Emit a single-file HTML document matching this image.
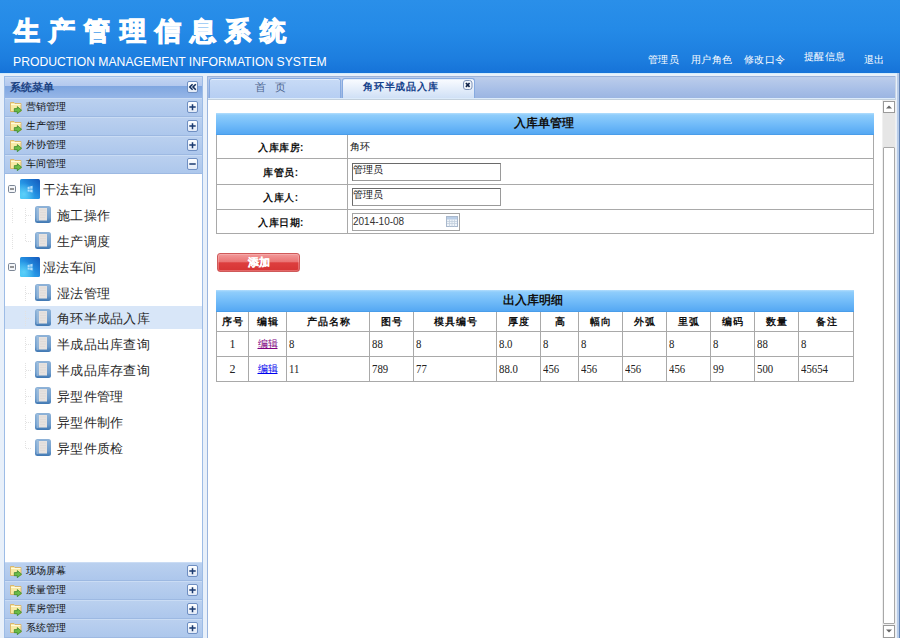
<!DOCTYPE html>
<html><head><meta charset="utf-8"><style>
*{box-sizing:border-box}
html,body{margin:0;padding:0;width:900px;height:638px;overflow:hidden}
body{font-family:"Liberation Sans",sans-serif;background:#e8f0fa;position:relative}
.abs{position:absolute}
#hdr{left:0;top:0;width:900px;height:73px;background:linear-gradient(#2a8fe9 0,#248ae7 40%,#1d7edf 80%,#1673d8 100%)}
#title{left:14px;top:14px;color:#fff;font-size:26px;font-weight:bold;-webkit-text-stroke:1.2px #fff;letter-spacing:9.2px;white-space:nowrap;line-height:34px}
#eng{left:13px;top:55px;color:#fff;font-size:12.2px;white-space:nowrap;line-height:14px}
.nav{top:53px;color:#fff;font-size:10px;letter-spacing:0.3px;white-space:nowrap;line-height:14px}
#side{left:4px;top:76px;width:199px;height:562px;background:#fff;border:1px solid #9dbce6;border-bottom:0}
#stitle{left:0;top:0;width:197px;height:21px;background:linear-gradient(#dae7f8 0,#c2d4f1 1px,#b3c8ee 9px,#7fa6e0 9px,#96b6e7 21px)}
#stitle span{position:absolute;left:5px;top:4px;font-size:10.5px;font-weight:bold;color:#1d4383;line-height:12px}
.btn{position:absolute;width:11px;height:12px;border:1px solid #6f8fc2;border-radius:2px;background:linear-gradient(#fdfeff,#e2eaf7);}
.btn svg{position:absolute;left:0;top:0}
.item{position:absolute;left:0;width:197px;height:19px;background:linear-gradient(#bad0ef,#adc7ec);border-top:1px solid #cadcf4;border-bottom:1px solid #9db9e2}
.item span{position:absolute;left:21px;top:2px;font-size:10px;color:#111;line-height:11px}
.fold{position:absolute;left:5px;top:3px;width:12px;height:12px}
.tree{position:absolute;left:0;top:97px;width:197px;height:388px;background:#fff}
.tn{position:absolute;font-size:13px;letter-spacing:0.3px;color:#2a2a2a;line-height:16px;white-space:nowrap}
.dv{position:absolute;width:1px;border-left:1px dotted #e2e2e2}
.dh{position:absolute;height:1px;border-top:1px dotted #e2e2e2}
#main{left:207px;top:76px;width:689px;height:562px;background:#fff;border-left:1px solid #9ab5de;border-right:1px solid #c9d5e5}
#tabs{left:0;top:0;width:687px;height:24px;background:linear-gradient(#bccdeb 0,#a8bfe7 12px,#9bb5e2 21px,#dcebfa 21px,#dcebfa 22px);border-top:1px solid #9cb2d9;border-bottom:1px solid #c3d0dc}
.tab{position:absolute;top:1px;height:20px;border:1px solid #86aae0;border-bottom:0;border-radius:3px 3px 0 0;background:linear-gradient(#c8dbf6,#b6cef2);box-shadow:inset 0 1px 0 #e3edfb}
table{border-collapse:collapse;table-layout:fixed}
.hd{background:linear-gradient(#9fd0f9 0,#7bbdf6 40%,#52a6f1 100%)}
#form td{border:1px solid #a9a9a9;font-size:11px;padding:0}
#det td{border:1px solid #a9a9a9;font-size:11px;padding:0 0 0 2px;font-family:"Liberation Serif",serif}
#det tr.h td{font-family:"Liberation Sans",sans-serif;font-weight:bold;text-align:center;padding:0}
</style></head><body>
<svg width="0" height="0" style="position:absolute">
<defs>
<linearGradient id="gw" x1="1" y1="0" x2="0" y2="1"><stop offset="0" stop-color="#1458bb"/><stop offset="0.5" stop-color="#2490e2"/><stop offset="1" stop-color="#38c0f4"/></linearGradient>
<radialGradient id="gw2" cx="0.2" cy="0.75" r="0.55"><stop offset="0" stop-color="#70e0ff" stop-opacity="0.7"/><stop offset="1" stop-color="#70e0ff" stop-opacity="0"/></radialGradient>
<linearGradient id="gp" x1="0" y1="0" x2="0" y2="1"><stop offset="0" stop-color="#8fb3d8"/><stop offset="0.7" stop-color="#6d9bcb"/><stop offset="1" stop-color="#3f77b2"/></linearGradient>




</defs></svg>
<div id="hdr" class="abs"></div><div class="abs" style="left:0;top:73px;width:900px;height:1px;background:#d2ebfc"></div>
<div id="title" class="abs">生产管理信息系统</div>
<div id="eng" class="abs">PRODUCTION MANAGEMENT INFORMATION SYSTEM</div>
<div class="abs nav" style="left:648px">管理员</div>
<div class="abs nav" style="left:691px">用户角色</div>
<div class="abs nav" style="left:744px">修改口令</div>
<div class="abs nav" style="left:804px;top:50px">提醒信息</div>
<div class="abs nav" style="left:864px">退出</div>
<div id="side" class="abs">
<div id="stitle" class="abs"><span>系统菜单</span><div class="btn" style="left:182px;top:4px"><svg width="9" height="10"><path d="M4.6 2.2L1.8 5L4.6 7.8M7.8 2.2L5 5L7.8 7.8" stroke="#14305e" stroke-width="1.6" fill="none"/></svg></div></div>
<div class="item" style="top:21px"><svg class="fold" viewBox="0 0 12 12"><path d="M0.5 0.5H4L5 1.5H11V9.5H0.5Z" fill="#f8eaa6" stroke="#dcae58" stroke-width="0.8"/><path d="M1 2.5H10.5" stroke="#fffadc" stroke-width="1"/><path d="M4.3 6.6H7.3V4.6L11.6 8.2L7.3 11.7V9.7H4.3Z" fill="#6cbc48" stroke="#2f7f24" stroke-width="0.7"/></svg><span>营销管理</span><div class="btn" style="left:182px;top:2px"><svg width="9" height="10"><path d="M1.3 5H7.7M4.5 2.3V8.3" stroke="#1a3a70" stroke-width="1.5"/></svg></div></div>
<div class="item" style="top:40px"><svg class="fold" viewBox="0 0 12 12"><path d="M0.5 0.5H4L5 1.5H11V9.5H0.5Z" fill="#f8eaa6" stroke="#dcae58" stroke-width="0.8"/><path d="M1 2.5H10.5" stroke="#fffadc" stroke-width="1"/><path d="M4.3 6.6H7.3V4.6L11.6 8.2L7.3 11.7V9.7H4.3Z" fill="#6cbc48" stroke="#2f7f24" stroke-width="0.7"/></svg><span>生产管理</span><div class="btn" style="left:182px;top:2px"><svg width="9" height="10"><path d="M1.3 5H7.7M4.5 2.3V8.3" stroke="#1a3a70" stroke-width="1.5"/></svg></div></div>
<div class="item" style="top:59px"><svg class="fold" viewBox="0 0 12 12"><path d="M0.5 0.5H4L5 1.5H11V9.5H0.5Z" fill="#f8eaa6" stroke="#dcae58" stroke-width="0.8"/><path d="M1 2.5H10.5" stroke="#fffadc" stroke-width="1"/><path d="M4.3 6.6H7.3V4.6L11.6 8.2L7.3 11.7V9.7H4.3Z" fill="#6cbc48" stroke="#2f7f24" stroke-width="0.7"/></svg><span>外协管理</span><div class="btn" style="left:182px;top:2px"><svg width="9" height="10"><path d="M1.3 5H7.7M4.5 2.3V8.3" stroke="#1a3a70" stroke-width="1.5"/></svg></div></div>
<div class="item" style="top:78px"><svg class="fold" viewBox="0 0 12 12"><path d="M0.5 0.5H4L5 1.5H11V9.5H0.5Z" fill="#f8eaa6" stroke="#dcae58" stroke-width="0.8"/><path d="M1 2.5H10.5" stroke="#fffadc" stroke-width="1"/><path d="M4.3 6.6H7.3V4.6L11.6 8.2L7.3 11.7V9.7H4.3Z" fill="#6cbc48" stroke="#2f7f24" stroke-width="0.7"/></svg><span>车间管理</span><div class="btn" style="left:182px;top:2px"><svg width="9" height="10"><path d="M1.3 5H7.7" stroke="#1a3a70" stroke-width="1.5"/></svg></div></div>
<div class="tree">
<div style="position:absolute;left:0;top:132px;width:197px;height:23px;background:#d8e6f8"></div>
<svg style="position:absolute;left:3px;top:11px" width="8" height="8" viewBox="0 0 8 8"><rect x="0.5" y="0.5" width="7" height="7" rx="1.2" fill="#f4f6f9" stroke="#7d8796"/><path d="M2 4H6" stroke="#333" stroke-width="1"/></svg>
<svg style="position:absolute;left:15px;top:5px" width="20" height="20" viewBox="0 0 20 20"><rect x="0" y="0" width="20" height="20" rx="1.5" fill="url(#gw)"/><rect x="0" y="0" width="20" height="20" rx="1.5" fill="url(#gw2)"/><path d="M7.6 7.9l2.1-.5v2.5H7.6zM10.2 7.3l2.4-.6v3.1h-2.4zM7.6 10.4h2.1v2.4l-2.1-.4zM10.2 10.4h2.4v3l-2.4-.5z" fill="#bfe6ff" opacity="0.9"/></svg>
<div class="tn" style="left:38px;top:8px">干法车间</div>
<div class="dv" style="left:7px;top:34px;height:15px"></div>
<div class="dv" style="left:20px;top:34px;height:15px"></div>
<div class="dh" style="left:21px;top:41px;width:5px"></div>
<svg style="position:absolute;left:30px;top:32px" width="16" height="17" viewBox="0 0 16 17"><rect x="0" y="0" width="16" height="17" rx="2.5" fill="url(#gp)"/><rect x="1.5" y="1" width="2" height="14" fill="#a9c8e6" opacity="0.6"/><path d="M3.8 2H12V14.5H3.8Z" fill="#e6e2e0"/><path d="M5 4H11M5 6.5H11M5 9H11M5 11.5H10" stroke="#dcd6d2" stroke-width="0.6"/></svg>
<div class="tn" style="left:52px;top:34px">施工操作</div>
<div class="dv" style="left:7px;top:60px;height:15px"></div>
<div class="dv" style="left:20px;top:60px;height:7px"></div>
<div class="dh" style="left:21px;top:67px;width:5px"></div>
<svg style="position:absolute;left:30px;top:58px" width="16" height="17" viewBox="0 0 16 17"><rect x="0" y="0" width="16" height="17" rx="2.5" fill="url(#gp)"/><rect x="1.5" y="1" width="2" height="14" fill="#a9c8e6" opacity="0.6"/><path d="M3.8 2H12V14.5H3.8Z" fill="#e6e2e0"/><path d="M5 4H11M5 6.5H11M5 9H11M5 11.5H10" stroke="#dcd6d2" stroke-width="0.6"/></svg>
<div class="tn" style="left:52px;top:60px">生产调度</div>
<svg style="position:absolute;left:3px;top:89px" width="8" height="8" viewBox="0 0 8 8"><rect x="0.5" y="0.5" width="7" height="7" rx="1.2" fill="#f4f6f9" stroke="#7d8796"/><path d="M2 4H6" stroke="#333" stroke-width="1"/></svg>
<svg style="position:absolute;left:15px;top:83px" width="20" height="20" viewBox="0 0 20 20"><rect x="0" y="0" width="20" height="20" rx="1.5" fill="url(#gw)"/><rect x="0" y="0" width="20" height="20" rx="1.5" fill="url(#gw2)"/><path d="M7.6 7.9l2.1-.5v2.5H7.6zM10.2 7.3l2.4-.6v3.1h-2.4zM7.6 10.4h2.1v2.4l-2.1-.4zM10.2 10.4h2.4v3l-2.4-.5z" fill="#bfe6ff" opacity="0.9"/></svg>
<div class="tn" style="left:38px;top:86px">湿法车间</div>
<div class="dv" style="left:20px;top:112px;height:15px"></div>
<div class="dh" style="left:21px;top:119px;width:5px"></div>
<svg style="position:absolute;left:30px;top:110px" width="16" height="17" viewBox="0 0 16 17"><rect x="0" y="0" width="16" height="17" rx="2.5" fill="url(#gp)"/><rect x="1.5" y="1" width="2" height="14" fill="#a9c8e6" opacity="0.6"/><path d="M3.8 2H12V14.5H3.8Z" fill="#e6e2e0"/><path d="M5 4H11M5 6.5H11M5 9H11M5 11.5H10" stroke="#dcd6d2" stroke-width="0.6"/></svg>
<div class="tn" style="left:52px;top:112px">湿法管理</div>
<div class="dv" style="left:20px;top:137px;height:15px"></div>
<div class="dh" style="left:21px;top:144px;width:5px"></div>
<svg style="position:absolute;left:30px;top:135px" width="16" height="17" viewBox="0 0 16 17"><rect x="0" y="0" width="16" height="17" rx="2.5" fill="url(#gp)"/><rect x="1.5" y="1" width="2" height="14" fill="#a9c8e6" opacity="0.6"/><path d="M3.8 2H12V14.5H3.8Z" fill="#e6e2e0"/><path d="M5 4H11M5 6.5H11M5 9H11M5 11.5H10" stroke="#dcd6d2" stroke-width="0.6"/></svg>
<div class="tn" style="left:52px;top:137px">角环半成品入库</div>
<div class="dv" style="left:20px;top:163px;height:15px"></div>
<div class="dh" style="left:21px;top:170px;width:5px"></div>
<svg style="position:absolute;left:30px;top:161px" width="16" height="17" viewBox="0 0 16 17"><rect x="0" y="0" width="16" height="17" rx="2.5" fill="url(#gp)"/><rect x="1.5" y="1" width="2" height="14" fill="#a9c8e6" opacity="0.6"/><path d="M3.8 2H12V14.5H3.8Z" fill="#e6e2e0"/><path d="M5 4H11M5 6.5H11M5 9H11M5 11.5H10" stroke="#dcd6d2" stroke-width="0.6"/></svg>
<div class="tn" style="left:52px;top:163px">半成品出库查询</div>
<div class="dv" style="left:20px;top:189px;height:15px"></div>
<div class="dh" style="left:21px;top:196px;width:5px"></div>
<svg style="position:absolute;left:30px;top:187px" width="16" height="17" viewBox="0 0 16 17"><rect x="0" y="0" width="16" height="17" rx="2.5" fill="url(#gp)"/><rect x="1.5" y="1" width="2" height="14" fill="#a9c8e6" opacity="0.6"/><path d="M3.8 2H12V14.5H3.8Z" fill="#e6e2e0"/><path d="M5 4H11M5 6.5H11M5 9H11M5 11.5H10" stroke="#dcd6d2" stroke-width="0.6"/></svg>
<div class="tn" style="left:52px;top:189px">半成品库存查询</div>
<div class="dv" style="left:20px;top:215px;height:15px"></div>
<div class="dh" style="left:21px;top:222px;width:5px"></div>
<svg style="position:absolute;left:30px;top:213px" width="16" height="17" viewBox="0 0 16 17"><rect x="0" y="0" width="16" height="17" rx="2.5" fill="url(#gp)"/><rect x="1.5" y="1" width="2" height="14" fill="#a9c8e6" opacity="0.6"/><path d="M3.8 2H12V14.5H3.8Z" fill="#e6e2e0"/><path d="M5 4H11M5 6.5H11M5 9H11M5 11.5H10" stroke="#dcd6d2" stroke-width="0.6"/></svg>
<div class="tn" style="left:52px;top:215px">异型件管理</div>
<div class="dv" style="left:20px;top:241px;height:15px"></div>
<div class="dh" style="left:21px;top:248px;width:5px"></div>
<svg style="position:absolute;left:30px;top:239px" width="16" height="17" viewBox="0 0 16 17"><rect x="0" y="0" width="16" height="17" rx="2.5" fill="url(#gp)"/><rect x="1.5" y="1" width="2" height="14" fill="#a9c8e6" opacity="0.6"/><path d="M3.8 2H12V14.5H3.8Z" fill="#e6e2e0"/><path d="M5 4H11M5 6.5H11M5 9H11M5 11.5H10" stroke="#dcd6d2" stroke-width="0.6"/></svg>
<div class="tn" style="left:52px;top:241px">异型件制作</div>
<div class="dv" style="left:20px;top:267px;height:7px"></div>
<div class="dh" style="left:21px;top:274px;width:5px"></div>
<svg style="position:absolute;left:30px;top:265px" width="16" height="17" viewBox="0 0 16 17"><rect x="0" y="0" width="16" height="17" rx="2.5" fill="url(#gp)"/><rect x="1.5" y="1" width="2" height="14" fill="#a9c8e6" opacity="0.6"/><path d="M3.8 2H12V14.5H3.8Z" fill="#e6e2e0"/><path d="M5 4H11M5 6.5H11M5 9H11M5 11.5H10" stroke="#dcd6d2" stroke-width="0.6"/></svg>
<div class="tn" style="left:52px;top:267px">异型件质检</div>
</div>
<div class="item" style="top:485px"><svg class="fold" viewBox="0 0 12 12"><path d="M0.5 0.5H4L5 1.5H11V9.5H0.5Z" fill="#f8eaa6" stroke="#dcae58" stroke-width="0.8"/><path d="M1 2.5H10.5" stroke="#fffadc" stroke-width="1"/><path d="M4.3 6.6H7.3V4.6L11.6 8.2L7.3 11.7V9.7H4.3Z" fill="#6cbc48" stroke="#2f7f24" stroke-width="0.7"/></svg><span>现场屏幕</span><div class="btn" style="left:182px;top:2px"><svg width="9" height="10"><path d="M1.3 5H7.7M4.5 2.3V8.3" stroke="#1a3a70" stroke-width="1.5"/></svg></div></div>
<div class="item" style="top:504px"><svg class="fold" viewBox="0 0 12 12"><path d="M0.5 0.5H4L5 1.5H11V9.5H0.5Z" fill="#f8eaa6" stroke="#dcae58" stroke-width="0.8"/><path d="M1 2.5H10.5" stroke="#fffadc" stroke-width="1"/><path d="M4.3 6.6H7.3V4.6L11.6 8.2L7.3 11.7V9.7H4.3Z" fill="#6cbc48" stroke="#2f7f24" stroke-width="0.7"/></svg><span>质量管理</span><div class="btn" style="left:182px;top:2px"><svg width="9" height="10"><path d="M1.3 5H7.7M4.5 2.3V8.3" stroke="#1a3a70" stroke-width="1.5"/></svg></div></div>
<div class="item" style="top:523px"><svg class="fold" viewBox="0 0 12 12"><path d="M0.5 0.5H4L5 1.5H11V9.5H0.5Z" fill="#f8eaa6" stroke="#dcae58" stroke-width="0.8"/><path d="M1 2.5H10.5" stroke="#fffadc" stroke-width="1"/><path d="M4.3 6.6H7.3V4.6L11.6 8.2L7.3 11.7V9.7H4.3Z" fill="#6cbc48" stroke="#2f7f24" stroke-width="0.7"/></svg><span>库房管理</span><div class="btn" style="left:182px;top:2px"><svg width="9" height="10"><path d="M1.3 5H7.7M4.5 2.3V8.3" stroke="#1a3a70" stroke-width="1.5"/></svg></div></div>
<div class="item" style="top:542px"><svg class="fold" viewBox="0 0 12 12"><path d="M0.5 0.5H4L5 1.5H11V9.5H0.5Z" fill="#f8eaa6" stroke="#dcae58" stroke-width="0.8"/><path d="M1 2.5H10.5" stroke="#fffadc" stroke-width="1"/><path d="M4.3 6.6H7.3V4.6L11.6 8.2L7.3 11.7V9.7H4.3Z" fill="#6cbc48" stroke="#2f7f24" stroke-width="0.7"/></svg><span>系统管理</span><div class="btn" style="left:182px;top:2px"><svg width="9" height="10"><path d="M1.3 5H7.7M4.5 2.3V8.3" stroke="#1a3a70" stroke-width="1.5"/></svg></div></div>
</div>
<div id="main" class="abs">
<div id="tabs" class="abs">
<div class="tab" style="left:1px;width:132px"><span style="position:absolute;left:45px;top:2px;font-size:11px;color:#4f6790;line-height:12px;white-space:pre">首   页</span></div>
<div class="tab" style="left:134px;width:133px;background:linear-gradient(#fafcff,#d0e0f6)"><span style="position:absolute;left:20px;top:2px;font-size:10px;letter-spacing:0.8px;font-weight:bold;color:#15428b;line-height:12px">角环半成品入库</span><svg style="position:absolute;left:120px;top:1px" width="10" height="10"><rect x="0.5" y="0.5" width="8.5" height="9" rx="2.5" fill="#f2f6fc" stroke="#7f93b8"/><path d="M2.9 3L6.6 6.8M6.6 3L2.9 6.8" stroke="#13254a" stroke-width="1.7"/></svg></div>
</div>
</div>
<div class="abs" style="left:216px;top:113px;width:658px;height:22px;background:linear-gradient(#b4defd 0,#8fcdfb 2px,#74bdf9 50%,#55a8f3 100%);border-bottom:1px solid #4a9de9"></div>
<div class="abs" style="left:514px;top:116px;white-space:nowrap;font-size:12px;font-weight:bold;color:#111;line-height:14px">入库单管理</div>
<div class="abs" style="left:216px;top:135px;width:658px;height:99px;border:1px solid #a9a9a9;border-top:0"></div>
<div class="abs" style="left:217px;top:158px;width:656px;height:1px;background:#a9a9a9"></div>
<div class="abs" style="left:217px;top:184px;width:656px;height:1px;background:#a9a9a9"></div>
<div class="abs" style="left:217px;top:209px;width:656px;height:1px;background:#a9a9a9"></div>
<div class="abs" style="left:347px;top:135px;width:1px;height:98px;background:#a9a9a9"></div>
<div class="abs" style="left:216px;top:141px;width:130px;text-align:center;font-size:10px;letter-spacing:0.5px;font-weight:bold;color:#111;line-height:13px">入库库房:</div>
<div class="abs" style="left:216px;top:166px;width:130px;text-align:center;font-size:10px;letter-spacing:0.5px;font-weight:bold;color:#111;line-height:13px">库管员:</div>
<div class="abs" style="left:216px;top:191px;width:130px;text-align:center;font-size:10px;letter-spacing:0.5px;font-weight:bold;color:#111;line-height:13px">入库人:</div>
<div class="abs" style="left:216px;top:216px;width:130px;text-align:center;font-size:10px;letter-spacing:0.5px;font-weight:bold;color:#111;line-height:13px">入库日期:</div>
<div class="abs" style="left:350px;top:141px;white-space:nowrap;font-size:10px;color:#111;line-height:12px">角环</div>
<div class="abs" style="left:352px;top:163px;width:149px;height:18px;border:1px solid #6a6a6a;border-right-color:#9a9a9a;border-bottom-color:#9a9a9a;background:#fff"></div>
<div class="abs" style="left:353px;top:164px;white-space:nowrap;font-size:10px;color:#111;line-height:12px">管理员</div>
<div class="abs" style="left:352px;top:188px;width:149px;height:18px;border:1px solid #6a6a6a;border-right-color:#9a9a9a;border-bottom-color:#9a9a9a;background:#fff"></div>
<div class="abs" style="left:353px;top:189px;white-space:nowrap;font-size:10px;color:#111;line-height:12px">管理员</div>
<div class="abs" style="left:352px;top:213px;width:108px;height:18px;border:1px solid #a4a4a4;background:#fff"></div>
<div class="abs" style="left:353px;top:216px;white-space:nowrap;font-size:10px;color:#333;line-height:12px">2014-10-08</div>
<svg class="abs" style="left:446px;top:216px" width="12" height="11"><rect x="0.5" y="0.5" width="11" height="10" fill="#eef3f9" stroke="#a9b8cc"/><rect x="1" y="1" width="10" height="2.5" fill="#b9cde6"/><path d="M1 5.5H11M1 7.5H11M3.5 3.5V10.5M6 3.5V10.5M8.5 3.5V10.5" stroke="#c3cfdd" stroke-width="0.8"/></svg>
<div class="abs" style="left:217px;top:253px;width:83px;height:19px;border:1px solid #cf5a5a;border-radius:3px;background:linear-gradient(#f29a9a 0,#ea7474 45%,#dd3e3e 52%,#d63434 100%);box-shadow:inset 0 0 0 1px rgba(255,200,200,0.35);color:#fff;font-size:11px;font-weight:bold;-webkit-text-stroke:0.3px #fff;text-align:center;line-height:16px">添加</div>
<div class="abs" style="left:216px;top:290px;width:638px;height:22px;background:linear-gradient(#b4defd 0,#8fcdfb 2px,#74bdf9 50%,#55a8f3 100%);border-bottom:1px solid #4a9de9"></div>
<div class="abs" style="left:503px;top:293px;white-space:nowrap;font-size:12px;font-weight:bold;color:#111;line-height:14px">出入库明细</div>
<div class="abs" style="left:216px;top:312px;width:638px;height:70px;border:1px solid #a9a9a9;border-top:0"></div>
<div class="abs" style="left:217px;top:331px;width:636px;height:1px;background:#a9a9a9"></div>
<div class="abs" style="left:217px;top:356px;width:636px;height:1px;background:#a9a9a9"></div>
<div class="abs" style="left:248px;top:312px;width:1px;height:69px;background:#a9a9a9"></div>
<div class="abs" style="left:286px;top:312px;width:1px;height:69px;background:#a9a9a9"></div>
<div class="abs" style="left:369px;top:312px;width:1px;height:69px;background:#a9a9a9"></div>
<div class="abs" style="left:413px;top:312px;width:1px;height:69px;background:#a9a9a9"></div>
<div class="abs" style="left:496px;top:312px;width:1px;height:69px;background:#a9a9a9"></div>
<div class="abs" style="left:540px;top:312px;width:1px;height:69px;background:#a9a9a9"></div>
<div class="abs" style="left:578px;top:312px;width:1px;height:69px;background:#a9a9a9"></div>
<div class="abs" style="left:622px;top:312px;width:1px;height:69px;background:#a9a9a9"></div>
<div class="abs" style="left:666px;top:312px;width:1px;height:69px;background:#a9a9a9"></div>
<div class="abs" style="left:710px;top:312px;width:1px;height:69px;background:#a9a9a9"></div>
<div class="abs" style="left:754px;top:312px;width:1px;height:69px;background:#a9a9a9"></div>
<div class="abs" style="left:798px;top:312px;width:1px;height:69px;background:#a9a9a9"></div>
<div class="abs" style="left:217px;top:315px;width:31px;padding-left:1px;text-align:center;font-size:10px;letter-spacing:1px;font-weight:bold;color:#111;line-height:13px;white-space:nowrap">序号</div>
<div class="abs" style="left:249px;top:315px;width:37px;padding-left:1px;text-align:center;font-size:10px;letter-spacing:1px;font-weight:bold;color:#111;line-height:13px;white-space:nowrap">编辑</div>
<div class="abs" style="left:287px;top:315px;width:82px;padding-left:1px;text-align:center;font-size:10px;letter-spacing:1px;font-weight:bold;color:#111;line-height:13px;white-space:nowrap">产品名称</div>
<div class="abs" style="left:370px;top:315px;width:43px;padding-left:1px;text-align:center;font-size:10px;letter-spacing:1px;font-weight:bold;color:#111;line-height:13px;white-space:nowrap">图号</div>
<div class="abs" style="left:414px;top:315px;width:82px;padding-left:1px;text-align:center;font-size:10px;letter-spacing:1px;font-weight:bold;color:#111;line-height:13px;white-space:nowrap">模具编号</div>
<div class="abs" style="left:497px;top:315px;width:43px;padding-left:1px;text-align:center;font-size:10px;letter-spacing:1px;font-weight:bold;color:#111;line-height:13px;white-space:nowrap">厚度</div>
<div class="abs" style="left:541px;top:315px;width:37px;padding-left:1px;text-align:center;font-size:10px;letter-spacing:1px;font-weight:bold;color:#111;line-height:13px;white-space:nowrap">高</div>
<div class="abs" style="left:579px;top:315px;width:43px;padding-left:1px;text-align:center;font-size:10px;letter-spacing:1px;font-weight:bold;color:#111;line-height:13px;white-space:nowrap">幅向</div>
<div class="abs" style="left:623px;top:315px;width:43px;padding-left:1px;text-align:center;font-size:10px;letter-spacing:1px;font-weight:bold;color:#111;line-height:13px;white-space:nowrap">外弧</div>
<div class="abs" style="left:667px;top:315px;width:43px;padding-left:1px;text-align:center;font-size:10px;letter-spacing:1px;font-weight:bold;color:#111;line-height:13px;white-space:nowrap">里弧</div>
<div class="abs" style="left:711px;top:315px;width:43px;padding-left:1px;text-align:center;font-size:10px;letter-spacing:1px;font-weight:bold;color:#111;line-height:13px;white-space:nowrap">编码</div>
<div class="abs" style="left:755px;top:315px;width:43px;padding-left:1px;text-align:center;font-size:10px;letter-spacing:1px;font-weight:bold;color:#111;line-height:13px;white-space:nowrap">数量</div>
<div class="abs" style="left:799px;top:315px;width:54px;padding-left:1px;text-align:center;font-size:10px;letter-spacing:1px;font-weight:bold;color:#111;line-height:13px;white-space:nowrap">备注</div>
<div class="abs" style="left:217px;top:337px;width:31px;text-align:center;font-family:'Liberation Serif',serif;font-size:12px;color:#222;line-height:14px">1</div>
<div class="abs" style="left:249px;top:337px;width:37px;text-align:center;font-size:10px;line-height:14px"><span style="color:#800080;text-decoration:underline">编辑</span></div>
<div class="abs" style="left:289px;top:337px;white-space:nowrap;font-family:'Liberation Serif',serif;font-size:12.5px;transform:scaleX(0.86);transform-origin:0 0;color:#222;line-height:14px">8</div>
<div class="abs" style="left:372px;top:337px;white-space:nowrap;font-family:'Liberation Serif',serif;font-size:12.5px;transform:scaleX(0.86);transform-origin:0 0;color:#222;line-height:14px">88</div>
<div class="abs" style="left:416px;top:337px;white-space:nowrap;font-family:'Liberation Serif',serif;font-size:12.5px;transform:scaleX(0.86);transform-origin:0 0;color:#222;line-height:14px">8</div>
<div class="abs" style="left:499px;top:337px;white-space:nowrap;font-family:'Liberation Serif',serif;font-size:12.5px;transform:scaleX(0.86);transform-origin:0 0;color:#222;line-height:14px">8.0</div>
<div class="abs" style="left:543px;top:337px;white-space:nowrap;font-family:'Liberation Serif',serif;font-size:12.5px;transform:scaleX(0.86);transform-origin:0 0;color:#222;line-height:14px">8</div>
<div class="abs" style="left:581px;top:337px;white-space:nowrap;font-family:'Liberation Serif',serif;font-size:12.5px;transform:scaleX(0.86);transform-origin:0 0;color:#222;line-height:14px">8</div>
<div class="abs" style="left:669px;top:337px;white-space:nowrap;font-family:'Liberation Serif',serif;font-size:12.5px;transform:scaleX(0.86);transform-origin:0 0;color:#222;line-height:14px">8</div>
<div class="abs" style="left:713px;top:337px;white-space:nowrap;font-family:'Liberation Serif',serif;font-size:12.5px;transform:scaleX(0.86);transform-origin:0 0;color:#222;line-height:14px">8</div>
<div class="abs" style="left:757px;top:337px;white-space:nowrap;font-family:'Liberation Serif',serif;font-size:12.5px;transform:scaleX(0.86);transform-origin:0 0;color:#222;line-height:14px">88</div>
<div class="abs" style="left:801px;top:337px;white-space:nowrap;font-family:'Liberation Serif',serif;font-size:12.5px;transform:scaleX(0.86);transform-origin:0 0;color:#222;line-height:14px">8</div>
<div class="abs" style="left:217px;top:362px;width:31px;text-align:center;font-family:'Liberation Serif',serif;font-size:12px;color:#222;line-height:14px">2</div>
<div class="abs" style="left:249px;top:362px;width:37px;text-align:center;font-size:10px;line-height:14px"><span style="color:#0000ee;text-decoration:underline">编辑</span></div>
<div class="abs" style="left:289px;top:362px;white-space:nowrap;font-family:'Liberation Serif',serif;font-size:12.5px;transform:scaleX(0.86);transform-origin:0 0;color:#222;line-height:14px">11</div>
<div class="abs" style="left:372px;top:362px;white-space:nowrap;font-family:'Liberation Serif',serif;font-size:12.5px;transform:scaleX(0.86);transform-origin:0 0;color:#222;line-height:14px">789</div>
<div class="abs" style="left:416px;top:362px;white-space:nowrap;font-family:'Liberation Serif',serif;font-size:12.5px;transform:scaleX(0.86);transform-origin:0 0;color:#222;line-height:14px">77</div>
<div class="abs" style="left:499px;top:362px;white-space:nowrap;font-family:'Liberation Serif',serif;font-size:12.5px;transform:scaleX(0.86);transform-origin:0 0;color:#222;line-height:14px">88.0</div>
<div class="abs" style="left:543px;top:362px;white-space:nowrap;font-family:'Liberation Serif',serif;font-size:12.5px;transform:scaleX(0.86);transform-origin:0 0;color:#222;line-height:14px">456</div>
<div class="abs" style="left:581px;top:362px;white-space:nowrap;font-family:'Liberation Serif',serif;font-size:12.5px;transform:scaleX(0.86);transform-origin:0 0;color:#222;line-height:14px">456</div>
<div class="abs" style="left:625px;top:362px;white-space:nowrap;font-family:'Liberation Serif',serif;font-size:12.5px;transform:scaleX(0.86);transform-origin:0 0;color:#222;line-height:14px">456</div>
<div class="abs" style="left:669px;top:362px;white-space:nowrap;font-family:'Liberation Serif',serif;font-size:12.5px;transform:scaleX(0.86);transform-origin:0 0;color:#222;line-height:14px">456</div>
<div class="abs" style="left:713px;top:362px;white-space:nowrap;font-family:'Liberation Serif',serif;font-size:12.5px;transform:scaleX(0.86);transform-origin:0 0;color:#222;line-height:14px">99</div>
<div class="abs" style="left:757px;top:362px;white-space:nowrap;font-family:'Liberation Serif',serif;font-size:12.5px;transform:scaleX(0.86);transform-origin:0 0;color:#222;line-height:14px">500</div>
<div class="abs" style="left:801px;top:362px;white-space:nowrap;font-family:'Liberation Serif',serif;font-size:12.5px;transform:scaleX(0.86);transform-origin:0 0;color:#222;line-height:14px">45654</div>
<div class="abs" style="left:882px;top:100px;width:14px;height:538px;background:#f0f0f0"></div>
<div class="abs" style="left:883px;top:101px;width:12px;height:12px;background:#fff;border:1px solid #9a9a9a"><svg width="10" height="10" style="position:absolute;left:0;top:0"><path d="M2 6.5L5 3.5L8 6.5Z" fill="#666"/></svg></div>
<div class="abs" style="left:883px;top:113px;width:12px;height:34px;background:#e6e6e6"></div>
<div class="abs" style="left:883px;top:147px;width:12px;height:477px;background:#fff;border:1px solid #a8a8a8;border-radius:1px"></div>
<div class="abs" style="left:883px;top:625px;width:12px;height:13px;background:#fff;border:1px solid #9a9a9a"><svg width="10" height="10" style="position:absolute;left:0;top:0"><path d="M2 3.5L5 6.5L8 3.5Z" fill="#666"/></svg></div>
<div class="abs" style="left:897px;top:73px;width:2px;height:565px;background:#b9cce7"></div><div class="abs" style="left:899px;top:73px;width:1px;height:565px;background:#6485b8"></div>
</body></html>
